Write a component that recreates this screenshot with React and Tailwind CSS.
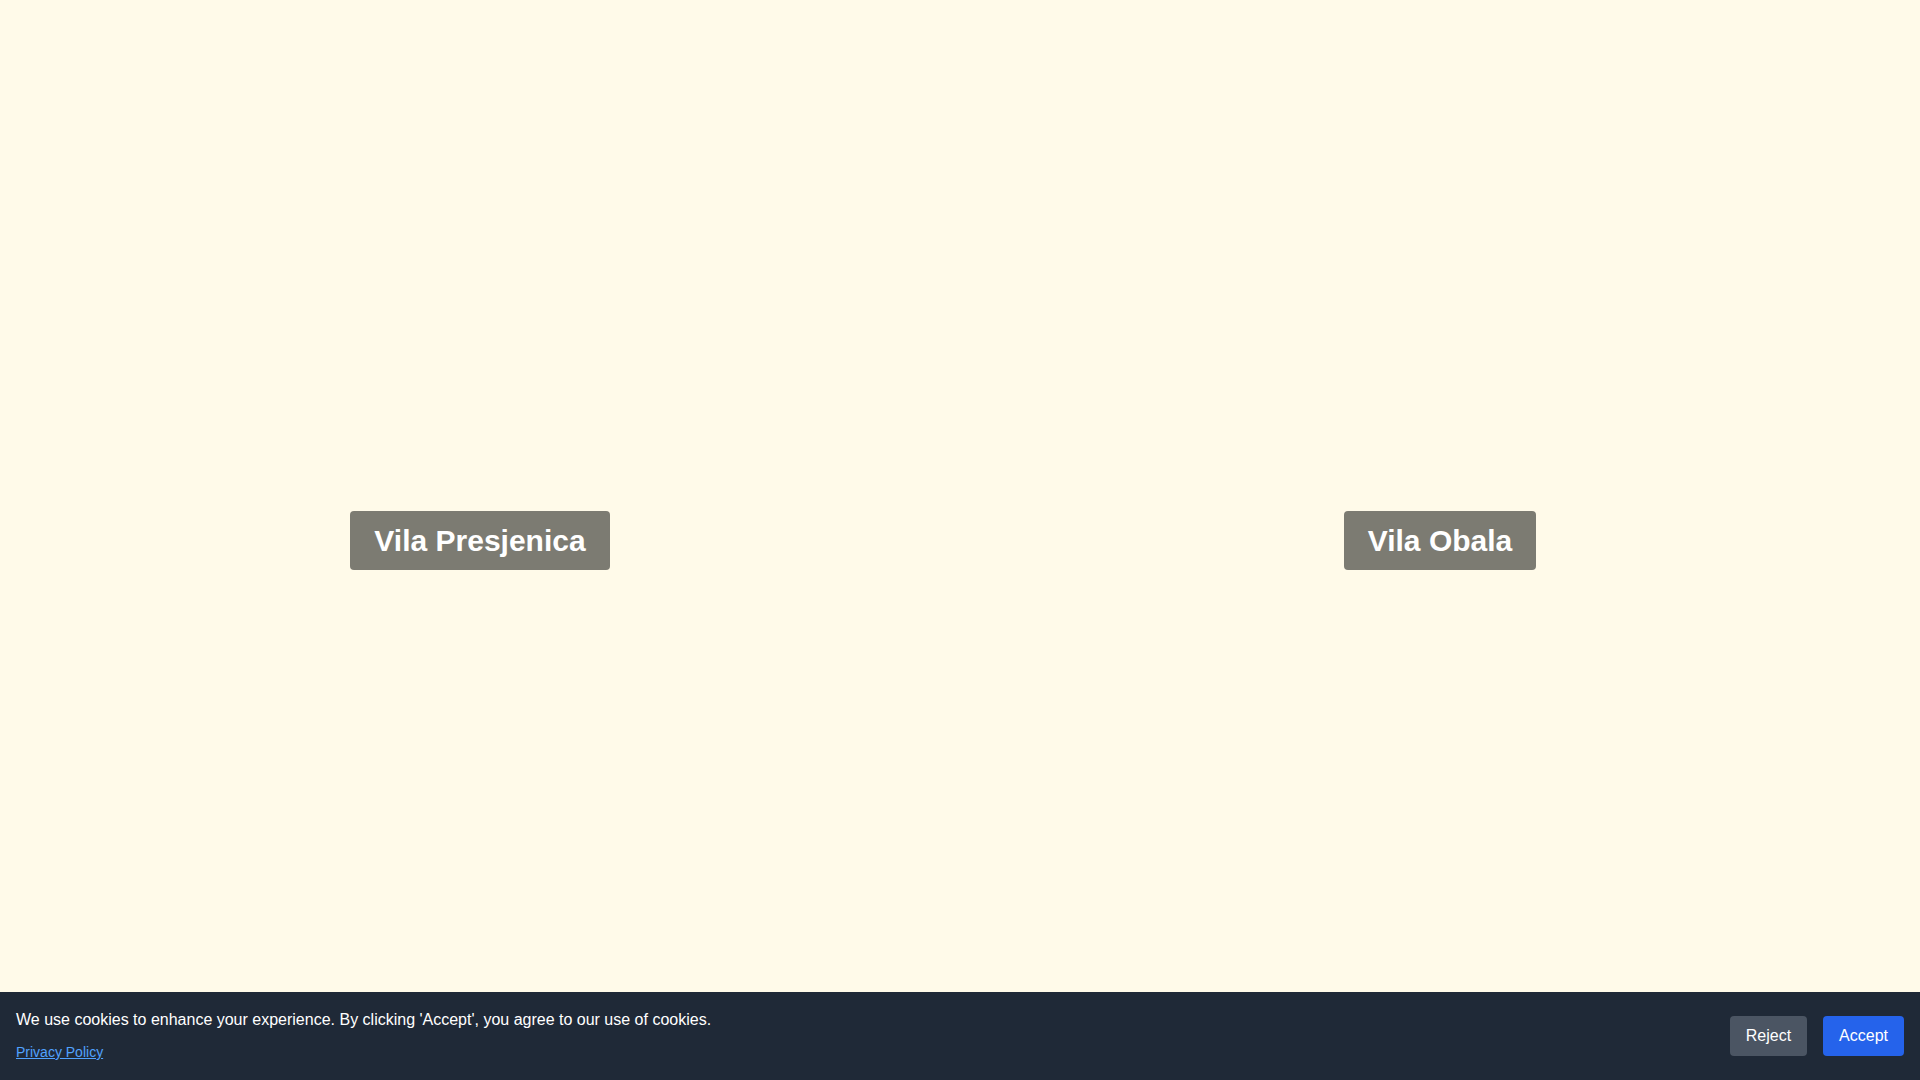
export default function App() {
  return (
    <div className="relative min-h-screen bg-[#fffae9]" style={{ fontFamily: '"Liberation Sans", Arial, sans-serif' }}>
      <div className="grid grid-cols-2 h-screen">
        <div className="flex items-center justify-center">
          <h2 className="bg-[#7c7b72] text-white font-bold text-[30px] leading-[35px] px-6 py-3 rounded">
            Vila Presjenica
          </h2>
        </div>
        <div className="flex items-center justify-center">
          <h2 className="bg-[#7c7b72] text-white font-bold text-[30px] leading-[35px] px-6 py-3 rounded">
            Vila Obala
          </h2>
        </div>
      </div>
      <div className="fixed bottom-0 left-0 right-0 bg-[#1f2937] text-white p-4 flex items-center justify-between">
        <div>
          <p className="text-base leading-6">
            We use cookies to enhance your experience. By clicking 'Accept', you agree to our use of cookies.
          </p>
          <div className="mt-2 text-base leading-6">
            <a href="#" className="text-sm text-blue-400 underline">Privacy Policy</a>
          </div>
        </div>
        <div className="flex gap-4">
          <button className="bg-[#4b5563] text-white px-4 py-2 rounded text-base leading-6">Reject</button>
          <button className="bg-[#2563eb] text-white px-4 py-2 rounded text-base leading-6">Accept</button>
        </div>
      </div>
    </div>
  );
}
